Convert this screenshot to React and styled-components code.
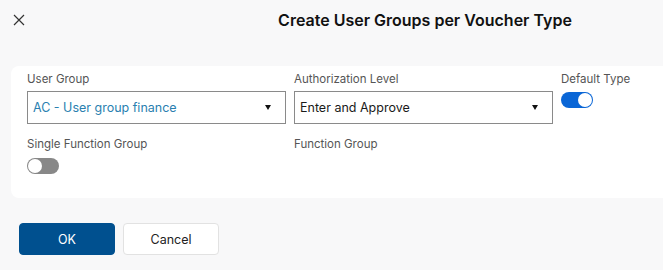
import React from "react";
import styled, { createGlobalStyle } from "styled-components";

const GlobalStyle = createGlobalStyle`
  html, body {
    margin: 0;
    padding: 0;
    background: #f8f8f9;
    overflow: hidden;
  }
  body {
    font-family: "Inter", "Noto Sans", sans-serif;
    color: #1f1f1f;
  }
`;

const Dialog = styled.div`
  width: 850px;
  height: 270px;
  display: flex;
  flex-direction: column;
  background: #f8f8f9;
`;

const Header = styled.div`
  position: relative;
  height: 40px;
  display: flex;
  align-items: center;
  justify-content: center;
`;

const CloseButton = styled.button`
  position: absolute;
  left: 12px;
  top: 13px;
  width: 14px;
  height: 14px;
  padding: 0;
  border: 0;
  background: transparent;
  display: flex;
  align-items: center;
  justify-content: center;
  cursor: pointer;
`;

const Title = styled.h1`
  margin: 0;
  font-size: 16px;
  font-weight: 600;
  color: #111;
`;

const Card = styled.div`
  margin: 26px 0 0 11px;
  height: 132px;
  background: #fff;
  border-radius: 8px;
  padding: 7px 16px 0 16px;
  box-sizing: border-box;
  display: grid;
  grid-template-columns: 259px 259px auto;
  column-gap: 8px;
  row-gap: 14px;
  align-content: start;
`;

const Field = styled.div`
  display: flex;
  flex-direction: column;
  gap: 5px;
`;

const Label = styled.span`
  font-size: 11.5px;
  color: #555;
  line-height: 13px;
`;

const SelectBox = styled.div`
  height: 33px;
  border: 1px solid #8a8a8a;
  box-sizing: border-box;
  display: flex;
  align-items: center;
  padding: 0 14px 0 5px;
  font-size: 12.5px;
  color: ${(p) => (p.$link ? "#2a7fb0" : "#1a1a1a")};
`;

const SelectText = styled.span`
  flex: 1;
`;

const Caret = styled.span`
  width: 0;
  height: 0;
  border-left: 3.5px solid transparent;
  border-right: 3.5px solid transparent;
  border-top: 5px solid #111;
`;

const Toggle = styled.div`
  width: 32px;
  height: 16px;
  border-radius: 8px;
  background: ${(p) => (p.$on ? "#0a66d6" : "#888")};
  position: relative;
  margin-top: ${(p) => p.$offset || 0}px;

  &::after {
    content: "";
    position: absolute;
    top: 1px;
    left: ${(p) => (p.$on ? "17px" : "1px")};
    width: 14px;
    height: 14px;
    border-radius: 50%;
    background: #fff;
  }
`;

const Footer = styled.div`
  display: flex;
  gap: 8px;
  padding: 25px 0 0 19px;
`;

const Button = styled.button`
  width: 96px;
  height: 32px;
  border-radius: 4px;
  font-family: "Inter", sans-serif;
  font-size: 12.5px;
  cursor: pointer;
  border: 1px solid ${(p) => (p.$primary ? "#00508f" : "#e2e2e2")};
  background: ${(p) => (p.$primary ? "#00508f" : "#fff")};
  color: ${(p) => (p.$primary ? "#fff" : "#222")};
`;

export default function App() {
  return (
    <Dialog>
      <GlobalStyle />
      <Header>
        <CloseButton aria-label="Close">
          <svg width="12" height="12" viewBox="0 0 12 12">
            <path d="M1 1 L11 11 M11 1 L1 11" stroke="#333" strokeWidth="1.2" />
          </svg>
        </CloseButton>
        <Title>Create User Groups per Voucher Type</Title>
      </Header>
      <Card>
        <Field>
          <Label>User Group</Label>
          <SelectBox $link>
            <SelectText>AC - User group finance</SelectText>
            <Caret />
          </SelectBox>
        </Field>
        <Field>
          <Label>Authorization Level</Label>
          <SelectBox>
            <SelectText>Enter and Approve</SelectText>
            <Caret />
          </SelectBox>
        </Field>
        <Field>
          <Label>Default Type</Label>
          <Toggle $on $offset={1} />
        </Field>
        <Field>
          <Label>Single Function Group</Label>
          <Toggle $offset={2} />
        </Field>
        <Field>
          <Label>Function Group</Label>
        </Field>
      </Card>
      <Footer>
        <Button $primary>OK</Button>
        <Button>Cancel</Button>
      </Footer>
    </Dialog>
  );
}
